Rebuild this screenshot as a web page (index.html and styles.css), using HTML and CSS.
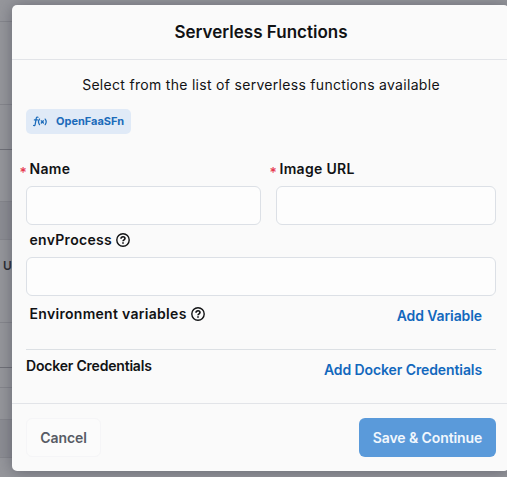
FILE: index.html
```html
<!DOCTYPE html>
<html lang="en">
<head>
<meta charset="utf-8">
<title>Serverless Functions</title>
<link rel="stylesheet" href="styles.css">
</head>
<body>
<div class="backdrop" aria-hidden="true">
  <div class="row r1"></div>
  <div class="row r2"></div>
  <div class="row r3"></div>
  <div class="row r4"></div>
  <div class="row r5 shade"></div>
  <div class="row r6">U</div>
  <div class="row r7 strong"></div>
  <div class="row r8"></div>
  <div class="row r9"></div>
  <div class="row r10 shade"></div>
  <div class="row r11"></div>
</div>
<main class="modal">
  <header class="modal-header"><h1>Serverless Functions</h1></header>
  <section class="modal-body">
    <p class="intro">Select from the list of serverless functions available</p>
    <div class="tag">
      <svg class="fx" viewBox="0 0 14 12" width="14" height="12" fill="none" stroke="currentColor" stroke-width="1.25" stroke-linecap="round">
        <path d="M5 1.2C3.9.7 3.4 1.3 3.2 2.5L2.2 8.3C2 9.4 1.5 9.8.6 9.5M1.4 3.9H4.4"/>
        <path d="M6.5 3.1C5.3 4.7 5.3 7 6.5 8.7M12.2 3.1C13.4 4.7 13.4 7 12.2 8.7M8.3 4.8L10.4 7M10.4 4.8L8.3 7"/>
      </svg>
      <span>OpenFaaSFn</span>
    </div>
    <div class="fields">
      <div class="field name-field">
        <label for="name"><span class="star">*</span>Name</label>
        <input id="name" type="text">
      </div>
      <div class="field">
        <label for="image"><span class="star">*</span>Image URL</label>
        <input id="image" type="text">
      </div>
    </div>
    <div class="field process">
      <label for="process">envProcess
        <svg class="help" viewBox="0 0 14 14" width="14" height="14" fill="none" stroke="currentColor" stroke-width="1.4"><circle cx="7" cy="7" r="6.2"/><path d="M5 5.7C5 4.5 5.8 3.8 7 3.8S9 4.5 9 5.5C9 6.8 7 6.8 7 8.3M7 9.3V10.7" stroke-width="1.6"/></svg>
      </label>
      <input id="process" type="text">
    </div>
    <div class="line variables">
      <span class="label">Environment variables
        <svg class="help" viewBox="0 0 14 14" width="14" height="14" fill="none" stroke="currentColor" stroke-width="1.4"><circle cx="7" cy="7" r="6.2"/><path d="M5 5.7C5 4.5 5.8 3.8 7 3.8S9 4.5 9 5.5C9 6.8 7 6.8 7 8.3M7 9.3V10.7" stroke-width="1.6"/></svg>
      </span>
      <a class="link">Add Variable</a>
    </div>
    <div class="line docker">
      <span class="subhead">Docker Credentials</span>
      <a class="link">Add Docker Credentials</a>
    </div>
  </section>
  <footer class="modal-footer">
    <button class="cancel" type="button">Cancel</button>
    <button class="save" type="button">Save &amp; Continue</button>
  </footer>
</main>
</body>
</html>
```
FILE: styles.css
```css
* { box-sizing: border-box; }
body {
  margin: 0;
  width: 507px;
  height: 477px;
  overflow: hidden;
  background: #96979c;
  color: #111214;
  font: 14px/20px Inter, "Liberation Sans", sans-serif;
}
.backdrop { position: absolute; inset: 0; }
.row { border-bottom: 1px solid #86878d; }
.r1 { height: 22px; }
.r2 { height: 83px; }
.r3 { height: 45px; border-color: #707178; }
.r4 { height: 52px; }
.r5 { height: 38px; }
.shade { background: #8d8e94; }
.r6 { height: 83px; padding: 16px 3px; font-size: 12px; font-weight: 600; color: #292b31; }
.r7 { height: 45px; border-color: #707178; }
.r8 { height: 20px; }
.r9 { height: 32px; }
.r10 { height: 38px; }
.r11 { height: 19px; border: 0; }
.modal {
  position: relative;
  width: 497px;
  height: 466px;
  margin: 5px 0 0 12px;
  border-radius: 5px;
  background: #fafafa;
  box-shadow: 0 1px 16px rgba(45, 47, 62, .45);
}
.modal-header {
  height: 55px;
  border-bottom: 1px solid #e2e4e8;
  padding-top: 15px;
}
h1 {
  margin: 0;
  text-align: center;
  font-size: 17px;
  line-height: 24px;
  font-weight: 600;
  letter-spacing: 0;
  padding-left: 1px;
}
.modal-body { height: 343px; padding: 15px 13px 0 14px; }
.intro { margin: 0; text-align: center; letter-spacing: .3px; }
.tag {
  display: flex;
  align-items: center;
  gap: 9px;
  width: 105px;
  height: 25px;
  margin-top: 14px;
  padding-left: 7px;
  border-radius: 5px;
  background: #e0eaf7;
  color: #1b6bba;
  font-size: 11px;
  line-height: 18px;
  font-weight: 700;
  letter-spacing: 0;
}
.tag span { padding-bottom: 1px; }
.fields { display: grid; grid-template-columns: 235px 220px; gap: 15px; margin-top: 25px; }
.field { display: flex; flex-direction: column; }
label, .label { display: flex; align-items: center; gap: 4px; height: 20px; padding-left: 3.5px; font-weight: 600; letter-spacing: .3px; }
.star { width: 6px; margin: 8px 0 0 -10px; color: #e63950; font-size: 14px; line-height: 12px; font-weight: 500; letter-spacing: 0; }
input {
  width: 100%;
  height: 39px;
  margin-top: 7px;
  border: 1px solid #dce0e6;
  border-radius: 6px;
  background: #fdfdfd;
}
.process { margin-top: 5px; }
.line { display: flex; justify-content: space-between; }
.variables { height: 54px; padding: 8px 14px 0 0; border-bottom: 1px solid #dce0e4; }
.link { padding-top: 2px; color: #1268bd; font-weight: 600; letter-spacing: -.1px; }
.docker { padding: 6px 14px 0 0; }
.docker .link { padding-top: 4px; }
.subhead { font-weight: 600; letter-spacing: -.2px; }
.modal-footer {
  display: flex;
  justify-content: space-between;
  height: 68px;
  border-top: 1px solid #e2e4e8;
  padding: 14px 13px 0 14px;
}
button { height: 39px; padding: 0; border: 0; border-radius: 6px; font: 600 14px/20px Inter, sans-serif; letter-spacing: -.1px; }
.cancel { width: 75px; border: 1px solid #f5f5f7; background: #fbfbfb; color: #575b65; }
.save { width: 137px; background: #5a9ada; color: #f1f7fd; }
```
